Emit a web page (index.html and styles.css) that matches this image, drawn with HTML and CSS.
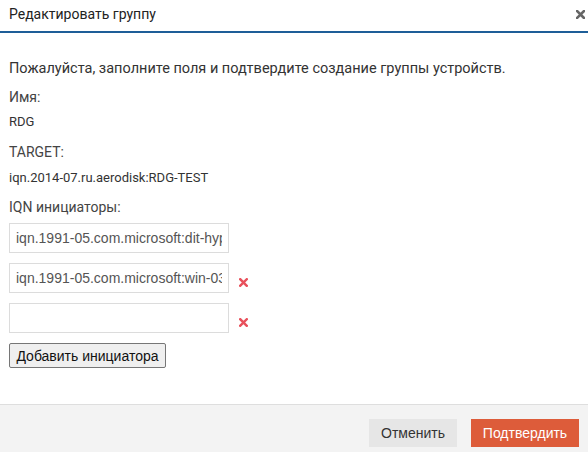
FILE: index.html
```html
<!DOCTYPE html>
<html lang="ru">
<head>
<meta charset="utf-8">
<title>Редактировать группу</title>
<link rel="stylesheet" href="styles.css">
</head>
<body>
<div class="modal">
  <div class="modal-header">
    <span class="modal-title">Редактировать группу</span>
    <span class="close-btn">
      <svg width="9" height="9" viewBox="0 0 9 9"><path d="M1 1L8 8M8 1L1 8" stroke="#666" stroke-width="2.6" stroke-linecap="square"/></svg>
    </span>
  </div>
  <div class="modal-body">
    <p class="intro">Пожалуйста, заполните поля и подтвердите создание группы устройств.</p>
    <div class="label">Имя:</div>
    <div class="value">RDG</div>
    <div class="label label-target">TARGET:</div>
    <div class="value">iqn.2014-07.ru.aerodisk:RDG-TEST</div>
    <div class="label label-iqn">IQN инициаторы:</div>
    <div class="inputs">
      <div class="input-row">
        <input class="text-input" type="text" value="iqn.1991-05.com.microsoft:dit-hyper01">
      </div>
      <div class="input-row">
        <input class="text-input" type="text" value="iqn.1991-05.com.microsoft:win-03abcdef">
        <span class="remove">
          <svg width="9" height="9" viewBox="0 0 9 9"><path d="M1.2 1.2L7.8 7.8M7.8 1.2L1.2 7.8" stroke="#e8505b" stroke-width="2.4" stroke-linecap="square"/></svg>
        </span>
      </div>
      <div class="input-row">
        <input class="text-input" type="text" value="">
        <span class="remove">
          <svg width="9" height="9" viewBox="0 0 9 9"><path d="M1.2 1.2L7.8 7.8M7.8 1.2L1.2 7.8" stroke="#e8505b" stroke-width="2.4" stroke-linecap="square"/></svg>
        </span>
      </div>
    </div>
    <button class="add-btn" type="button">Добавить инициатора</button>
  </div>
  <div class="modal-footer">
    <button class="btn btn-cancel" type="button">Отменить</button>
    <button class="btn btn-confirm" type="button">Подтвердить</button>
  </div>
</div>
</body>
</html>
```
FILE: styles.css
```css
html, body {
  margin: 0;
  padding: 0;
  background: #fff;
}
body {
  width: 588px;
  height: 452px;
  overflow: hidden;
  font-family: Roboto, "Liberation Sans", Arial, sans-serif;
  color: #333;
}
.modal {
  display: flex;
  flex-direction: column;
  height: 452px;
}
.modal-header {
  height: 31px;
  flex: none;
  border-bottom: 2px solid #1e5e98;
  display: flex;
  align-items: center;
  justify-content: space-between;
  padding: 0 3px 0 9px;
}
.modal-title {
  font-size: 14px;
  color: #222;
  position: relative;
  top: -2px;
}
.close-btn {
  display: flex;
  position: relative;
  top: -1px;
}
.modal-body {
  flex: 1;
  padding: 26px 9px 0 9px;
}
.intro {
  margin: 0 0 8px 0;
  font-size: 14.5px;
  line-height: 20px;
  color: #333;
}
.label {
  font-size: 14px;
  line-height: 20px;
  color: #444;
  margin-bottom: 5px;
}
.label-target {
  margin-top: 10px;
  margin-bottom: 6px;
}
.label-iqn {
  margin-top: 9px;
  margin-bottom: 6px;
}
.value {
  font-size: 13px;
  line-height: 20px;
  color: #333;
}
.inputs {
  display: flex;
  flex-direction: column;
  gap: 10px;
}
.input-row {
  display: flex;
  align-items: center;
}
.text-input {
  box-sizing: border-box;
  width: 220px;
  height: 30px;
  margin: 0;
  border: 1px solid #dcdcdc;
  border-radius: 0;
  padding: 0 6px;
  font-family: "Liberation Sans", Arial, sans-serif;
  font-size: 14px;
  color: #555;
  background: #fff;
  outline: none;
}
.remove {
  display: flex;
  margin-left: 10px;
  position: relative;
  top: 4px;
}
.add-btn {
  margin-top: 10px;
  box-sizing: border-box;
  width: 157px;
  height: 25px;
  padding: 0;
  font-family: "Liberation Sans", Arial, sans-serif;
  font-size: 14px;
  color: #111;
  background: #efefef;
  border: 1px solid #767676;
  border-radius: 2px;
}
.modal-footer {
  flex: none;
  height: 33px;
  border-top: 1px solid #dedede;
  background: #f3f3f3;
  display: flex;
  justify-content: flex-end;
  align-items: flex-start;
  gap: 14px;
  padding: 14px 9px 0 0;
}
.btn {
  height: 28px;
  border: none;
  border-radius: 0;
  padding: 0;
  font-family: "Liberation Sans", Arial, sans-serif;
  font-size: 14px;
}
.btn-cancel {
  width: 88px;
  background: #e6e6e6;
  color: #333;
}
.btn-confirm {
  width: 108px;
  background: #dd5c3a;
  color: #fff;
}
```
